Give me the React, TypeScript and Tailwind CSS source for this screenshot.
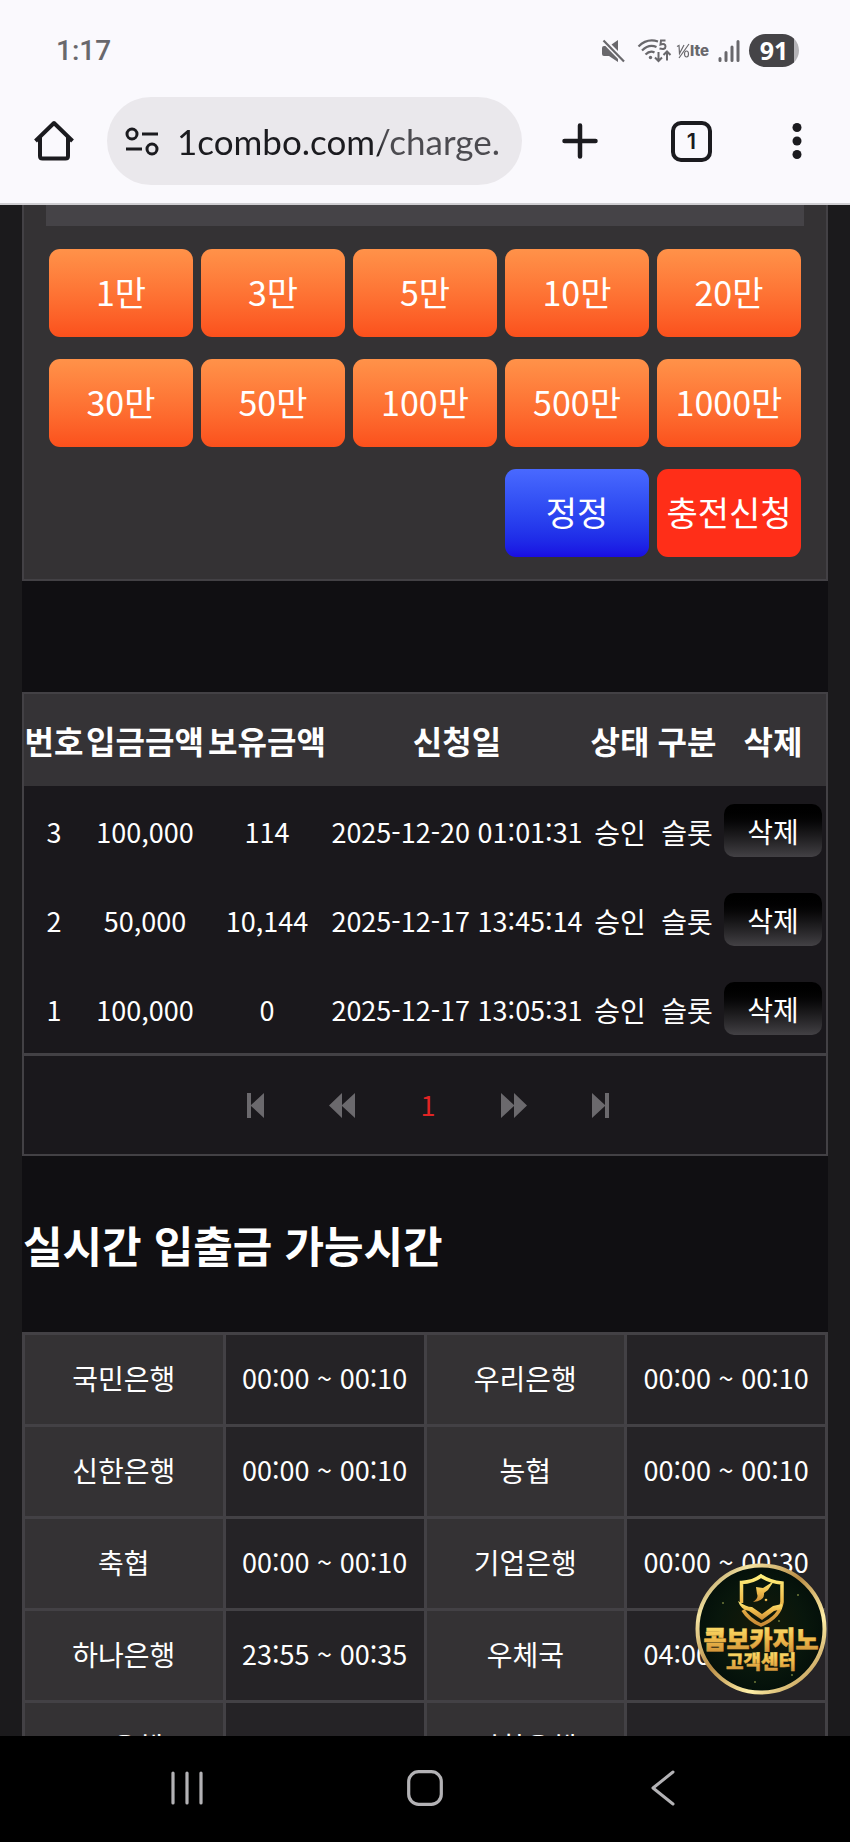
import type { ReactNode } from "react";

const amounts = ["1만", "3만", "5만", "10만", "20만", "30만", "50만", "100만", "500만", "1000만"];

const deposits = [
  { no: 3, amount: "100,000", balance: "114", date: "2025-12-20 01:01:31" },
  { no: 2, amount: "50,000", balance: "10,144", date: "2025-12-17 13:45:14" },
  { no: 1, amount: "100,000", balance: "0", date: "2025-12-17 13:05:31" },
];

const bankHours = [
  ["국민은행", "00:00 ~ 00:10", "우리은행", "00:00 ~ 00:10"],
  ["신한은행", "00:00 ~ 00:10", "농협", "00:00 ~ 00:10"],
  ["축협", "00:00 ~ 00:10", "기업은행", "00:00 ~ 00:30"],
  ["하나은행", "23:55 ~ 00:35", "우체국", "04:00 ~ 05:00"],
  ["sc은행", "", "외환은행", ""],
];

const actionButton = "h-[88px] rounded-[11px] pb-0.5 text-[34px] leading-none whitespace-nowrap";
const bankName = "border-3 border-[#434145] bg-[#343234] p-0 pb-1 font-normal";
const bankTime = "border-3 border-[#434145] bg-[#252326] pb-1 text-[27px]";

function StatusBar() {
  return (
    <div className="flex h-[97px] items-center justify-between pt-1 pr-[51px] pl-[56px] text-[#69686c]">
      <span className="font-[Roboto] text-[28px] font-medium">1:17</span>
      <div className="flex items-center">
        {/* muted speaker */}
        <svg className="h-6 w-6" viewBox="0 0 24 24" fill="currentColor">
          <path d="M1 9a2 2 0 0 1 2-2h3l11 11v5l-9-6H3a2 2 0 0 1-2-2z" />
          <path d="M10.500 5.500L17 1v11z" />
          <path d="M2.500 1.500L23 22.500" fill="none" stroke="#faf9fd" strokeWidth="5" />
          <path d="M2.500 1.500L23 22.500" fill="none" stroke="currentColor" strokeWidth="2.200" />
        </svg>
        {/* wifi with band number and traffic arrows */}
        <svg className="ml-3 h-6 w-[35px]" viewBox="0 0 35 24" fill="none" stroke="currentColor" strokeWidth="2.200">
          <path d="M1.500 7.500Q10 -1 21 2.500" />
          <path d="M5 11.500Q12 4.500 19.500 8" />
          <path d="M8.500 15.500Q13 11 17.500 13.500" />
          <circle cx="13.500" cy="18.500" r="1.700" fill="currentColor" stroke="none" />
          <path d="M21.500 13v9M18 18.500l3.500 3.500 3.500-3.500" strokeWidth="2" />
          <path d="M30 21.500v-9M26.500 16l3.500-3.500 3.500 3.500" strokeWidth="2" />
          <path d="M28.500 1.500H24L23.500 5.500Q28.500 4 28.500 7.500T22.500 9.500" strokeWidth="2" />
        </svg>
        <span className="ml-1 flex items-center">
          <svg className="h-4 w-[14px]" viewBox="0 0 14 16" fill="none" stroke="currentColor" strokeWidth="1.200">
            <path d="M1 3.500l2-1 .5 8L8 2M13 1L3 15" />
            <ellipse cx="10.500" cy="11" rx="2" ry="3" />
          </svg>
          <span className="font-[Inter] text-[15px] leading-none font-extrabold">lte</span>
        </span>
        <svg className="ml-[9px] h-6 w-[22px]" viewBox="0 0 22 24" fill="none" stroke="currentColor" strokeWidth="3" strokeLinecap="round">
          <path d="M2 19.500v2M8 13.500v8M14 8v13.500M20 2.500v19" />
        </svg>
        <span className="ml-[9px] flex h-[33px] w-[50px] items-center justify-center rounded-full bg-linear-to-r from-[#454447] from-90% to-[#b5b4b8] to-90% font-['Open_Sans'] text-[25px] font-bold text-white">
          91
        </span>
      </div>
    </div>
  );
}

function AddressBar() {
  return (
    <div className="flex h-[106px] items-start text-[#1b1b1f]">
      <button aria-label="홈" className="flex h-[88px] w-[107px] items-center justify-center">
        <svg className="h-11 w-11" viewBox="0 0 44 44" fill="none" stroke="currentColor" strokeWidth="4" strokeLinejoin="round">
          <path d="M3.500 22L22 4l18.500 18M8 18.500V37q0 2.500 2.500 2.500h23q2.500 0 2.500-2.500V18.500" />
        </svg>
      </button>
      <div className="flex h-[88px] flex-1 items-center rounded-full bg-[#eae8ec] pr-4 pl-[18px]">
        <svg className="h-[30px] w-[34px] shrink-0" viewBox="0 0 34 30" fill="none" stroke="currentColor" strokeWidth="3">
          <circle cx="7" cy="8" r="5" />
          <path d="M17 8h16M1 23h16" />
          <circle cx="27" cy="23" r="5" />
        </svg>
        <input
          aria-label="주소"
          readOnly
          value="1combo.com/charge."
          className="ml-[18px] w-0 flex-1 bg-linear-to-r from-[#1b1b1f] from-61% to-[#4c4b50] to-63% bg-clip-text font-[Lato] text-[35px] text-transparent outline-none"
        />
      </div>
      <div className="flex h-[88px] w-[328px] items-center pl-[30px]">
        <button aria-label="새 탭" className="flex h-14 w-14 items-center justify-center">
          <svg className="h-9 w-9" viewBox="0 0 36 36" stroke="currentColor" strokeWidth="4.500" strokeLinecap="round">
            <path d="M18 2.500v31M2.500 18h31" />
          </svg>
        </button>
        <button aria-label="탭 1개" className="ml-[63px] flex h-[41px] w-[41px] items-center justify-center rounded-[10px] border-4 border-current font-[Inter] text-[22px] leading-none font-semibold">
          1
        </button>
        <button aria-label="메뉴" className="ml-[72px] flex h-14 w-[26px] items-center justify-center">
          <svg className="h-9 w-[10px]" viewBox="0 0 10 36" fill="currentColor">
            <circle cx="5" cy="4.500" r="4.500" />
            <circle cx="5" cy="18" r="4.500" />
            <circle cx="5" cy="31.500" r="4.500" />
          </svg>
        </button>
      </div>
    </div>
  );
}

function PageLink({ label, children }: { label: string; children: ReactNode }) {
  return (
    <a href="#" aria-label={label} className="flex h-full w-[86px] items-center justify-center">
      {children}
    </a>
  );
}

function ArrowIcon({ d }: { d: string }) {
  return (
    <svg className="h-[25px] w-[26px]" viewBox="0 0 26 25" fill="#6b696d">
      <path d={d} />
    </svg>
  );
}

function Deposits() {
  return (
    <section className="mt-[111px] border-2 border-[#434145] bg-[#1a181c]">
      <table className="w-full table-fixed text-center text-[28px] leading-none whitespace-nowrap">
        <colgroup>
          <col className="w-[60px]" />
          <col className="w-[122px]" />
          <col className="w-[122px]" />
          <col className="w-[258px]" />
          <col className="w-[68px]" />
          <col className="w-[66px]" />
          <col className="w-[106px]" />
        </colgroup>
        <thead>
          <tr className="h-[92px] bg-[#353336] text-[32px]">
            {["번호", "입금금액", "보유금액", "신청일", "상태", "구분", "삭제"].map((name) => (
              <th key={name} className="p-0 font-bold">{name}</th>
            ))}
          </tr>
        </thead>
        <tbody>
          {deposits.map((row) => (
            <tr key={row.no} className="h-[89px]">
              <td className="pt-0.5 text-[27px]">{row.no}</td>
              <td className="pt-0.5 text-[27px]">{row.amount}</td>
              <td className="pt-0.5 text-[27px]">{row.balance}</td>
              <td className="pt-0.5 text-[27px]">{row.date}</td>
              <td className="pt-0.5">승인</td>
              <td className="pt-0.5">슬롯</td>
              <td>
                <button className="mx-auto block h-[53px] w-[98px] rounded-[10px] bg-linear-to-b from-black to-[#434145]">삭제</button>
              </td>
            </tr>
          ))}
        </tbody>
      </table>
      <nav aria-label="페이지" className="flex h-[101px] justify-center border-t-3 border-[#434145] pl-[6px]">
        <PageLink label="처음"><ArrowIcon d="M4 0h4v12L21 0v25L8 13v12H4z" /></PageLink>
        <PageLink label="이전"><ArrowIcon d="M0 12.500L13 0v12L26 0v25L13 13v12z" /></PageLink>
        <PageLink label="1"><span className="text-[27px] text-[#e02424]">1</span></PageLink>
        <PageLink label="다음"><ArrowIcon d="M0 0l13 12V0l13 12.500L13 25V13L0 25z" /></PageLink>
        <PageLink label="마지막"><ArrowIcon d="M5 0l13 12V0h4v25h-4V13L5 25z" /></PageLink>
      </nav>
    </section>
  );
}

function SupportBadge() {
  return (
    <button aria-label="콤보카지노 고객센터" className="absolute right-[23px] bottom-[41px] h-[132px] w-[132px]">
      <svg viewBox="0 0 132 132" className="h-full w-full">
        <defs>
          <linearGradient id="ring" x1="0" y1="0" x2="1" y2="1">
            <stop offset="0" stopColor="#8a6a35" />
            <stop offset=".2" stopColor="#f3e3a2" />
            <stop offset=".45" stopColor="#b98c45" />
            <stop offset=".7" stopColor="#fff0a8" />
            <stop offset="1" stopColor="#a87834" />
          </linearGradient>
          <linearGradient id="gold" x1="0" y1="0" x2="0" y2="1">
            <stop offset="0" stopColor="#fff07c" />
            <stop offset=".5" stopColor="#f1bd4c" />
            <stop offset="1" stopColor="#c98a35" />
          </linearGradient>
          <radialGradient id="face">
            <stop offset="0" stopColor="#161a08" />
            <stop offset=".7" stopColor="#08160c" />
            <stop offset="1" stopColor="#04100a" />
          </radialGradient>
        </defs>
        <circle cx="66" cy="66" r="63.500" fill="url(#face)" stroke="url(#ring)" strokeWidth="4" />
        <g fill="#6f7a3a">
          <circle cx="28" cy="40" r="1" />
          <circle cx="103" cy="32" r="1" />
          <circle cx="84" cy="58" r="1" />
          <circle cx="60" cy="119" r="1" />
          <circle cx="97" cy="112" r="1" />
        </g>
        {/* shield with a handshake sweep and a crescent */}
        <path
          d="M46.500 40V19.500Q58 19 66 13q9 6 21 7v19q-2 15-21 23-12-5-18-15"
          fill="none"
          stroke="url(#gold)"
          strokeWidth="3.500"
        />
        <g fill="url(#gold)">
          <path d="M43 38q8 6 14 6l10 7 11-8 9-2v5l-8 2-12 9-13-9q-8-1-11-10z" />
          <path d="M61 24l7 1 11-7-6 9-4 3q1 8-11 9 6-4 4-8z" />
          <circle cx="71" cy="37" r="1.300" />
        </g>
        <g textAnchor="middle" fill="url(#gold)" stroke="url(#gold)" fontFamily="Noto Sans CJK KR, sans-serif" fontWeight="900">
          <text x="66" y="86" fontSize="25" strokeWidth=".6">콤보카지노</text>
          <text x="66" y="106" fontSize="19" strokeWidth=".4">고객센터</text>
        </g>
      </svg>
    </button>
  );
}

export default function App() {
  return (
    <div lang="ko" className="flex h-screen flex-col overflow-hidden bg-[#1b1a1c] font-['Noto_Sans_CJK_KR',sans-serif] text-white">
      <header className="shrink-0 border-b-2 border-[#cfced2] bg-[#faf9fd]">
        <StatusBar />
        <AddressBar />
      </header>

      <main className="relative min-h-0 flex-1 overflow-hidden px-[22px]">
        <div className="bg-[#100f12]">
          <section className="border-2 border-t-0 border-[#434145] bg-[#343234] px-[22px] pb-[22px]">
            <div className="h-[21px] bg-[#454347]" />
            <div className="mt-[23px] grid grid-cols-5 gap-x-2 gap-y-[22px] px-[3px]">
              {amounts.map((label) => (
                <button key={label} className={`${actionButton} bg-linear-to-b from-[#ff9249] to-[#fb501c]`}>
                  {label}
                </button>
              ))}
              <button className={`${actionButton} col-start-4 bg-linear-to-b from-[#4969ff] to-[#1a0ce2]`}>정정</button>
              <button className={`${actionButton} bg-[#ff2e18]`}>충전신청</button>
            </div>
          </section>

          <Deposits />

          <h2 className="flex h-[176px] items-center pl-px text-[43px] font-bold">실시간 입출금 가능시간</h2>

          <table className="w-full table-fixed border-collapse text-center text-[28px] leading-none whitespace-nowrap">
            <tbody>
              {bankHours.map(([bankA, hoursA, bankB, hoursB]) => (
                <tr key={bankA} className="h-[92px]">
                  <th scope="row" className={bankName}>{bankA}</th>
                  <td className={bankTime}>{hoursA}</td>
                  <th scope="row" className={bankName}>{bankB}</th>
                  <td className={bankTime}>{hoursB}</td>
                </tr>
              ))}
            </tbody>
          </table>
        </div>
        <SupportBadge />
      </main>

      <nav aria-label="시스템" className="flex h-[106px] shrink-0 bg-black px-[68px] pb-[3px] text-[#b3b2b5]">
        <button aria-label="최근 앱" className="flex flex-1 items-center justify-center">
          <svg className="h-9 w-9" viewBox="0 0 36 36" stroke="currentColor" strokeWidth="3.200" strokeLinecap="round">
            <path d="M4 3v30M18 3v30M32 3v30" />
          </svg>
        </button>
        <button aria-label="홈 화면" className="flex flex-1 items-center justify-center">
          <svg className="h-9 w-9" viewBox="0 0 36 36" fill="none" stroke="currentColor" strokeWidth="3.200">
            <rect x="1.700" y="1.700" width="32.600" height="32.600" rx="10" />
          </svg>
        </button>
        <button aria-label="뒤로" className="flex flex-1 items-center justify-center">
          <svg className="h-9 w-6" viewBox="0 0 24 36" fill="none" stroke="currentColor" strokeWidth="3" strokeLinecap="round" strokeLinejoin="round">
            <path d="M22 2L2 18l20 16" />
          </svg>
        </button>
      </nav>
    </div>
  );
}
